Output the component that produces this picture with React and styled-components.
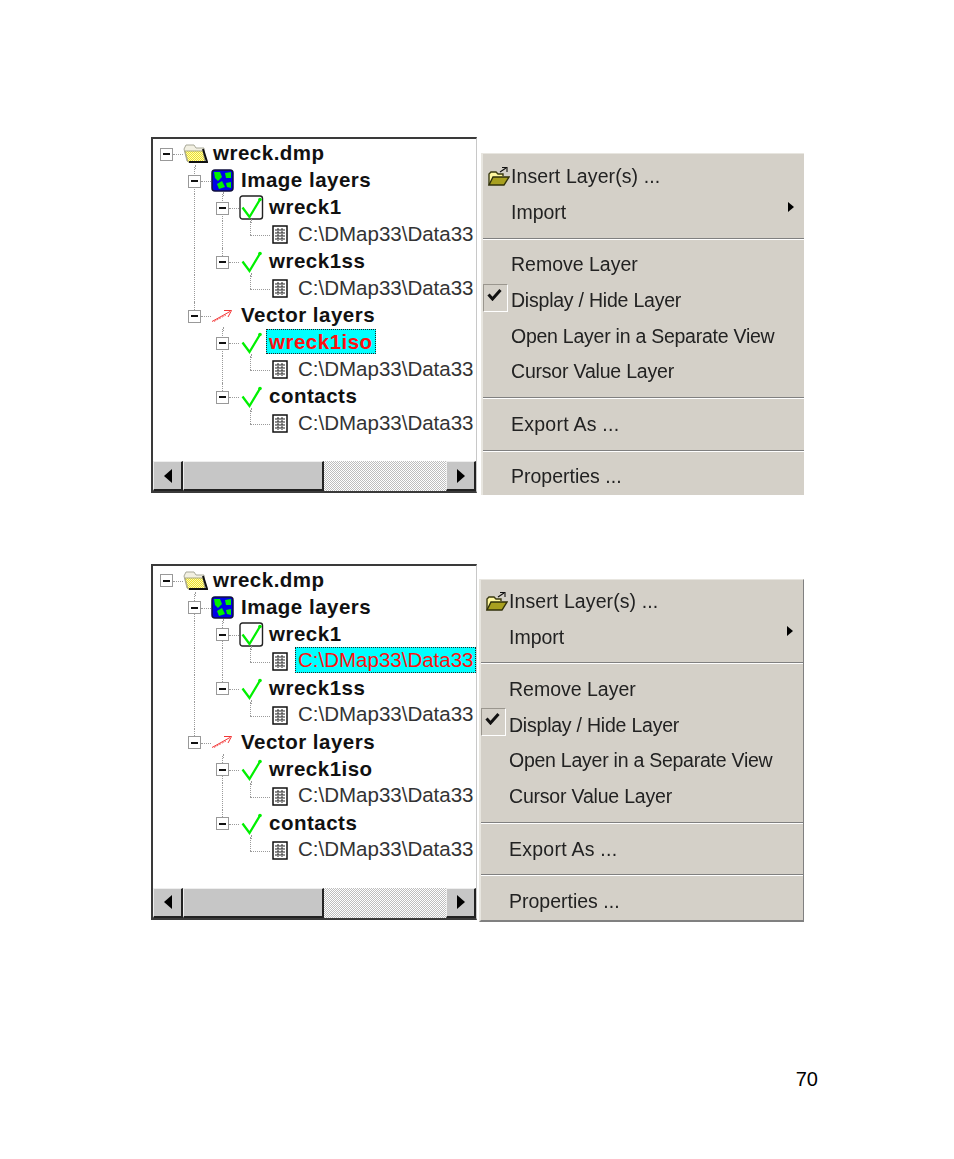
import React from "react";
import styled, { createGlobalStyle, css } from "styled-components";

const dotted = "#9a9a9a";

const Folder = () => (
  <svg width="25" height="21" viewBox="0 0 25 21">
    <defs>
      <pattern id="dither" width="2" height="2" patternUnits="userSpaceOnUse">
        <rect width="2" height="2" fill="#ffffb0" />
        <rect width="1" height="1" fill="#ecdc30" />
        <rect x="1" y="1" width="1" height="1" fill="#ecdc30" />
      </pattern>
    </defs>
    <path d="M1 6 L3 2 H11 L13 5 H21 V18 H4 Z" fill="#f2f0e2" stroke="#a8a898" />
    <path d="M2 8 H20 L22 19 H5 Z" fill="url(#dither)" stroke="#a8a880" />
    <path d="M20 6 L24 19 H6" fill="none" stroke="#111" strokeWidth="2" />
  </svg>
);

const MapIcon = () => (
  <svg width="23" height="23" viewBox="0 0 23 23">
    <rect x="1" y="1" width="21" height="21" rx="3" fill="#0000e8" stroke="#101040" strokeWidth="1.5" />
    <path d="M3 3 L9 3 L11 8 L7 12 L4 9 Z" fill="#00f000" />
    <path d="M14 4 L20 3 L20 9 L15 9 Z" fill="#00f000" />
    <path d="M6 15 L11 12 L14 18 L8 20 Z" fill="#00f000" />
    <path d="M15 14 L20 13 L20 19 L16 18 Z" fill="#00f000" />
  </svg>
);

const Check = ({ boxed }) => (
  <svg width="25" height="25" viewBox="0 0 25 25">
    {boxed && <rect x="1" y="1" width="22.5" height="23" rx="2.5" fill="#fff" stroke="#222" strokeWidth="1.4" />}
    <path d="M3.5 12.5 L10.5 22 L21 4.5" fill="none" stroke="#00f000" strokeWidth="2.3" />
    <circle cx="21" cy="4.5" r="1.8" fill="#00f000" />
  </svg>
);

const Arrow = () => (
  <svg width="22" height="14" viewBox="0 0 22 14">
    <path d="M1 12.5 L19 2.5" fill="none" stroke="#f02020" strokeWidth="0.9" />
    <path d="M3 12.5 L15 6" fill="none" stroke="#f02020" strokeWidth="0.7" strokeDasharray="2 1" />
    <path d="M13 1.5 H20.5 L17 8" fill="none" stroke="#f02020" strokeWidth="0.9" />
  </svg>
);

const Doc = () => (
  <svg width="16" height="19" viewBox="0 0 16 19">
    <rect x="1" y="1" width="14" height="17" fill="#fff" stroke="#111" strokeWidth="1.5" />
    <path d="M3 5 H13 M3 8 H13 M3 11 H13 M3 14 H13" stroke="#222" strokeWidth="1.2" />
    <path d="M6 3 V16 M10 3 V16" stroke="#222" strokeWidth="1" strokeDasharray="2 1" />
  </svg>
);

const OpenFolder = () => (
  <svg width="23" height="22" viewBox="0 0 23 22">
    <path d="M2 19 V8 L4 6 H9 L11 8 H16 V10" fill="#fff8a0" stroke="#3a3a10" strokeWidth="1.4" />
    <path d="M2 19 L6 11 H22 L17 19 Z" fill="#a8a020" stroke="#30300a" strokeWidth="1.4" />
    <path d="M13 6 L19 2 M15 1.5 H20 V6" fill="none" stroke="#111" strokeWidth="1.1" />
  </svg>
);

const icons = {
  folder: <Folder />,
  map: <MapIcon />,
  box: <Check boxed />,
  check: <Check />,
  arrow: <Arrow />,
};

const treeRows = (selected) => [
  { level: 0, icon: "folder", label: "wreck.dmp", pipes: [], tail: "none" },
  { level: 1, icon: "map", label: "Image layers", pipes: [false], tail: "full" },
  { level: 2, icon: "box", label: "wreck1", pipes: [false, true], tail: "full" },
  { level: 3, label: "C:\\DMap33\\Data33", pipes: [false, true, true], selected: selected === "path" },
  { level: 2, icon: "check", label: "wreck1ss", pipes: [false, true], tail: "half" },
  { level: 3, label: "C:\\DMap33\\Data33", pipes: [false, true, false] },
  { level: 1, icon: "arrow", label: "Vector layers", pipes: [false], tail: "half" },
  { level: 2, icon: "check", label: "wreck1iso", pipes: [false, false], tail: "full", selected: selected === "iso" },
  { level: 3, label: "C:\\DMap33\\Data33", pipes: [false, false, true] },
  { level: 2, icon: "check", label: "contacts", pipes: [false, false], tail: "half" },
  { level: 3, label: "C:\\DMap33\\Data33", pipes: [false, false, false] },
];

const TreeRow = ({ row }) => (
  <Row>
    {row.pipes.map((on, i) => (
      <Indent key={i} $pipe={on} />
    ))}
    {row.level === 3 ? (
      <>
        <Elbow />
        <DocSlot>
          <Doc />
        </DocSlot>
        <PathLabel $selected={row.selected}>{row.label}</PathLabel>
      </>
    ) : (
      <>
        <BoxCell $tail={row.tail}>
          <Expander />
        </BoxCell>
        <IconSlot>{icons[row.icon]}</IconSlot>
        <NodeLabel $selected={row.selected}>{row.label}</NodeLabel>
      </>
    )}
  </Row>
);

const Tree = ({ selected }) => (
  <TreePanel>
    <TreeBody>
      {treeRows(selected).map((row, i) => (
        <TreeRow key={i} row={row} />
      ))}
    </TreeBody>
    <ScrollBar>
      <ScrollButton $dir="left" />
      <Thumb />
      <Track />
      <ScrollButton $dir="right" />
    </ScrollBar>
  </TreePanel>
);

const Menu = ({ closed, top, width }) => (
  <MenuPanel $closed={closed} $top={top} $width={width}>
    <MenuItem $track={0.1}>
      <MenuIcon>
        <OpenFolder />
      </MenuIcon>
      Insert Layer(s) ...
    </MenuItem>
    <MenuItem>
      <MenuIcon />
      Import
      <SubArrow />
    </MenuItem>
    <Separator />
    <MenuItem>
      <MenuIcon />
      Remove Layer
    </MenuItem>
    <MenuItem $track={-0.22}>
      <MenuIcon>
        <Ticked>
          <svg width="15" height="13" viewBox="0 0 15 13">
            <path d="M1.5 6.5 L5.5 11 L13.5 2" fill="none" stroke="#111" strokeWidth="3" />
          </svg>
        </Ticked>
      </MenuIcon>
      Display / Hide Layer
    </MenuItem>
    <MenuItem $track={-0.25}>
      <MenuIcon />
      Open Layer in a Separate View
    </MenuItem>
    <MenuItem $track={-0.2}>
      <MenuIcon />
      Cursor Value Layer
    </MenuItem>
    <Separator />
    <MenuItem $track={0.25}>
      <MenuIcon />
      Export As ...
    </MenuItem>
    <Separator />
    <MenuItem>
      <MenuIcon />
      Properties ...
    </MenuItem>
  </MenuPanel>
);

export default function App() {
  return (
    <Page>
      <GlobalStyle />
      <Figure $gap={4} $top={137}>
        <Tree selected="iso" />
        <Menu closed top={16} width={323} />
      </Figure>
      <Figure $gap={2} $top={69}>
        <Tree selected="path" />
        <Menu top={15} width={325} />
      </Figure>
      <PageNumber>70</PageNumber>
    </Page>
  );
}

const GlobalStyle = createGlobalStyle`
  html, body {
    margin: 0;
    background: #fff;
  }
`;

const Page = styled.div`
  width: 954px;
  height: 1159px;
  overflow: hidden;
  font-family: "Liberation Sans", Arial, sans-serif;
`;

const Figure = styled.div`
  display: flex;
  align-items: flex-start;
  gap: ${(p) => p.$gap}px;
  margin: ${(p) => p.$top}px 0 0 151px;
  filter: blur(0.4px);
`;

const TreePanel = styled.div`
  width: 326px;
  height: 356px;
  box-sizing: border-box;
  display: flex;
  flex-direction: column;
  border: 2px solid #3a3a3a;
  border-right: 1px solid #c8c8c8;
  background: #fff;
  overflow: hidden;
`;

const TreeBody = styled.div`
  flex: 1;
  padding: 1px 0 0 7px;
  overflow: hidden;
`;

const Row = styled.div`
  display: flex;
  align-items: center;
  height: 27px;
  white-space: nowrap;
`;

const Indent = styled.div`
  flex: none;
  width: 28px;
  height: 100%;
  ${(p) =>
    p.$pipe &&
    css`
      background: repeating-linear-gradient(to bottom, ${dotted} 0 1px, transparent 1px 2px) 6px 0 / 1px 100% no-repeat;
    `}
`;

const Elbow = styled.div`
  flex: none;
  position: relative;
  width: 28px;
  height: 100%;

  &::before {
    content: "";
    position: absolute;
    left: 6px;
    top: 0;
    height: 14px;
    border-left: 1px dotted ${dotted};
  }

  &::after {
    content: "";
    position: absolute;
    left: 6px;
    top: 14px;
    width: 20px;
    border-top: 1px dotted ${dotted};
  }
`;

const DocSlot = styled.div`
  flex: none;
  width: 26px;
  display: flex;
  align-items: center;
`;

const BoxCell = styled.div`
  flex: none;
  position: relative;
  width: 23px;
  height: 100%;
  display: flex;
  align-items: center;

  &::before {
    content: "";
    position: absolute;
    left: 6px;
    top: 0;
    height: ${(p) => (p.$tail === "full" ? "100%" : p.$tail === "half" ? "50%" : "0")};
    border-left: 1px dotted ${dotted};
  }

  &::after {
    content: "";
    position: absolute;
    left: 13px;
    right: 0;
    top: 14px;
    border-top: 1px dotted ${dotted};
  }
`;

const Expander = styled.div`
  position: relative;
  z-index: 1;
  box-sizing: border-box;
  width: 13px;
  height: 13px;
  margin-top: 1px;
  border: 1px solid #999;
  background: linear-gradient(#111, #111) center / 7px 2px no-repeat #fff;
`;

const IconSlot = styled.div`
  flex: none;
  position: relative;
  width: 30px;
  height: 100%;
  display: flex;
  align-items: center;

  &::after {
    content: "";
    position: absolute;
    left: 12px;
    top: 25px;
    height: 4px;
    border-left: 1px dotted ${dotted};
  }
`;

const selectedLabel = css`
  background: #00ffff;
  color: #ff1010;
  outline: 1px dotted #222;
  outline-offset: -1px;
`;

const NodeLabel = styled.span`
  margin: -2px 0 0 -3px;
  padding: 0 3px;
  height: 25px;
  line-height: 25px;
  font-size: 20.5px;
  font-weight: 700;
  letter-spacing: 0.5px;
  color: #111;
  ${(p) => p.$selected && selectedLabel}
`;

const PathLabel = styled.span`
  margin: -2px 0 0 -3px;
  padding: 0 3px;
  height: 26px;
  line-height: 26px;
  font-size: 20.5px;
  color: #333;
  flex: 1;
  ${(p) => p.$selected && selectedLabel}
`;

const ScrollBar = styled.div`
  flex: none;
  display: flex;
  height: 30px;
`;

const raised = css`
  box-sizing: border-box;
  background: #c6c6c6;
  border: 1px solid #eee;
  border-right: 2px solid #222;
  border-bottom: 2px solid #222;
`;

const ScrollButton = styled.div`
  ${raised}
  flex: none;
  width: 30px;
  display: flex;
  align-items: center;
  justify-content: center;

  &::before {
    content: "";
    border-top: 7px solid transparent;
    border-bottom: 7px solid transparent;
    ${(p) => (p.$dir === "left" ? "border-right: 8px solid #000;" : "border-left: 8px solid #000;")}
  }
`;

const Thumb = styled.div`
  ${raised}
  flex: none;
  width: 141px;
`;

const Track = styled.div`
  flex: 1;
  background: repeating-conic-gradient(#bdbdbd 0 25%, #fff 0 50%) 0 0 / 2px 2px;
`;

const MenuPanel = styled.div`
  flex: none;
  width: ${(p) => p.$width}px;
  margin-top: ${(p) => p.$top}px;
  box-sizing: border-box;
  padding: ${(p) => (p.$closed ? "5px 0 0" : "4px 0 0")};
  background: #d4d0c8;
  border-top: 1px solid #e8e6e0;
  border-left: 2px solid #e8e6e0;
  ${(p) =>
    !p.$closed &&
    css`
      border-right: 1px solid #808080;
      border-bottom: 2px solid #808080;
    `}
`;

const MenuItem = styled.div`
  position: relative;
  display: flex;
  align-items: center;
  height: 35.6px;
  font-size: 19.5px;
  letter-spacing: ${(p) => p.$track || 0}px;
  color: #222;
  white-space: nowrap;
`;

const MenuIcon = styled.span`
  flex: none;
  width: 28px;
  height: 100%;
  display: flex;
  align-items: center;
  padding-left: 4px;
  box-sizing: border-box;
`;

const Ticked = styled.span`
  box-sizing: border-box;
  width: 25px;
  height: 28px;
  margin: 0 0 6px -4px;
  padding: 3px 0 0 3px;
  border: 1px solid;
  border-color: #9a968e #fff #fff #9a968e;

  svg {
    display: block;
  }
`;

const SubArrow = styled.span`
  position: absolute;
  right: 10px;
  top: 7px;
  border-top: 5px solid transparent;
  border-bottom: 5px solid transparent;
  border-left: 6px solid #000;
`;

const Separator = styled.div`
  height: 17px;
  display: flex;
  align-items: center;

  &::before {
    content: "";
    flex: 1;
    height: 1px;
    background: #808080;
    border-bottom: 1px solid #fff;
  }
`;

const PageNumber = styled.div`
  margin: 145px 136px 0 0;
  text-align: right;
  font-size: 20px;
  line-height: 24px;
  color: #000;
`;
